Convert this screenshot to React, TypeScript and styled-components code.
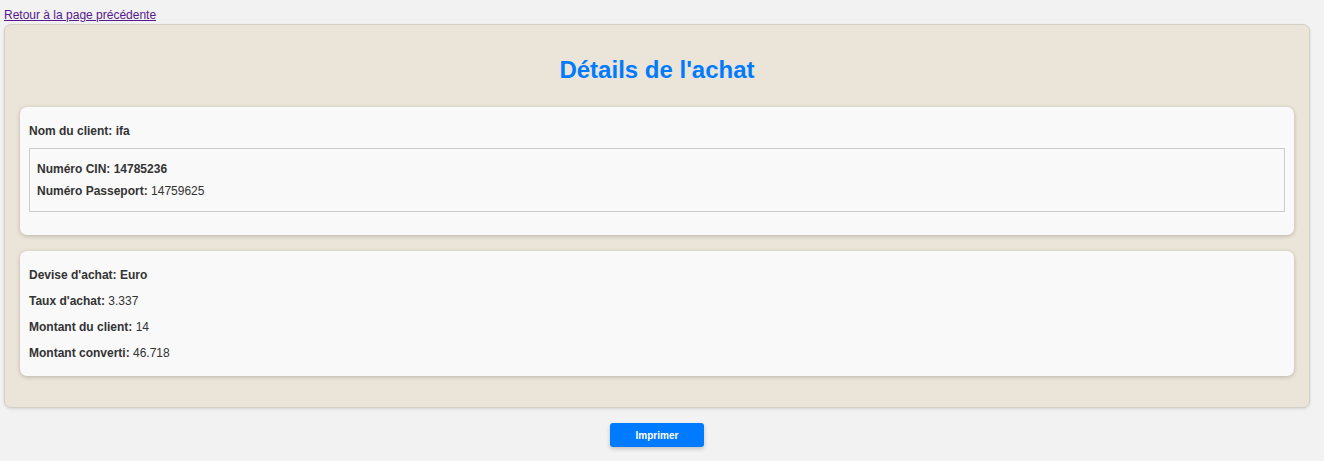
import React from "react";
import styled, { createGlobalStyle } from "styled-components";

const GlobalStyle = createGlobalStyle`
  html, body {
    margin: 0;
    padding: 0;
    background: #f2f2f2;
    font-family: "Liberation Sans", Arial, sans-serif;
    color: #333;
  }
`;

const Page = styled.div`
  padding: 8px 14px 14px 4px;
`;

const BackLink = styled.a`
  display: block;
  width: fit-content;
  font-size: 12px;
  line-height: 14px;
  color: #551a8b;
  text-decoration: underline;
`;

const Container = styled.div`
  margin-top: 2px;
  background: #ebe4d8;
  border: 1px solid #d4d0c8;
  border-radius: 7px;
  box-shadow: 0 1px 3px rgba(0, 0, 0, 0.12);
  padding: 15px 15px 31px;
  display: flex;
  flex-direction: column;
  gap: 16px;
`;

const Title = styled.h1`
  margin: 16px 0 7px;
  text-align: center;
  color: #007bff;
  font-size: 24px;
  line-height: 28px;
  font-weight: bold;
`;

const Card = styled.section<{ $gap?: number }>`
  background: #f9f9f9;
  border-radius: 7px;
  box-shadow: 0 1px 4px rgba(0, 0, 0, 0.22);
  padding: 17px 9px 16px;
  display: flex;
  flex-direction: column;
  gap: ${(p) => p.$gap ?? 12}px;
`;

const IdBox = styled.div`
  margin: 0 0 7px;
  border: 1px solid #ccc;
  padding: 13px 7px 13px;
  display: flex;
  flex-direction: column;
  gap: 8px;
`;

const Line = styled.p<{ $bold?: boolean }>`
  margin: 0;
  font-size: 12px;
  line-height: 14px;
  color: #333;
  font-weight: ${(p) => (p.$bold ? "bold" : "normal")};
`;

const Label = styled.strong`
  font-weight: bold;
`;

const Actions = styled.div`
  display: flex;
  justify-content: center;
  padding-top: 15px;
`;

const PrintButton = styled.button`
  width: 94px;
  height: 24px;
  border: none;
  border-radius: 3px;
  background: #007bff;
  color: #fff;
  font-family: "Liberation Sans", Arial, sans-serif;
  font-size: 10px;
  font-weight: bold;
  box-shadow: 0 2px 4px rgba(0, 0, 0, 0.2);
  cursor: pointer;
`;

const achat = {
  client: "ifa",
  cin: "14785236",
  passeport: "14759625",
  devise: "Euro",
  taux: "3.337",
  montant: "14",
  converti: "46.718",
};

const App = () => {
  return (
    <Page>
      <GlobalStyle />
      <BackLink href="#">Retour à la page précédente</BackLink>
      <Container>
        <Title>Détails de l'achat</Title>
        <Card $gap={10}>
          <Line $bold>Nom du client: {achat.client}</Line>
          <IdBox>
            <Line $bold>Numéro CIN: {achat.cin}</Line>
            <Line>
              <Label>Numéro Passeport:</Label> {achat.passeport}
            </Line>
          </IdBox>
        </Card>
        <Card>
          <Line $bold>Devise d'achat: {achat.devise}</Line>
          <Line>
            <Label>Taux d'achat:</Label> {achat.taux}
          </Line>
          <Line>
            <Label>Montant du client:</Label> {achat.montant}
          </Line>
          <Line>
            <Label>Montant converti:</Label> {achat.converti}
          </Line>
        </Card>
      </Container>
      <Actions>
        <PrintButton>Imprimer</PrintButton>
      </Actions>
    </Page>
  );
};

export default App;
